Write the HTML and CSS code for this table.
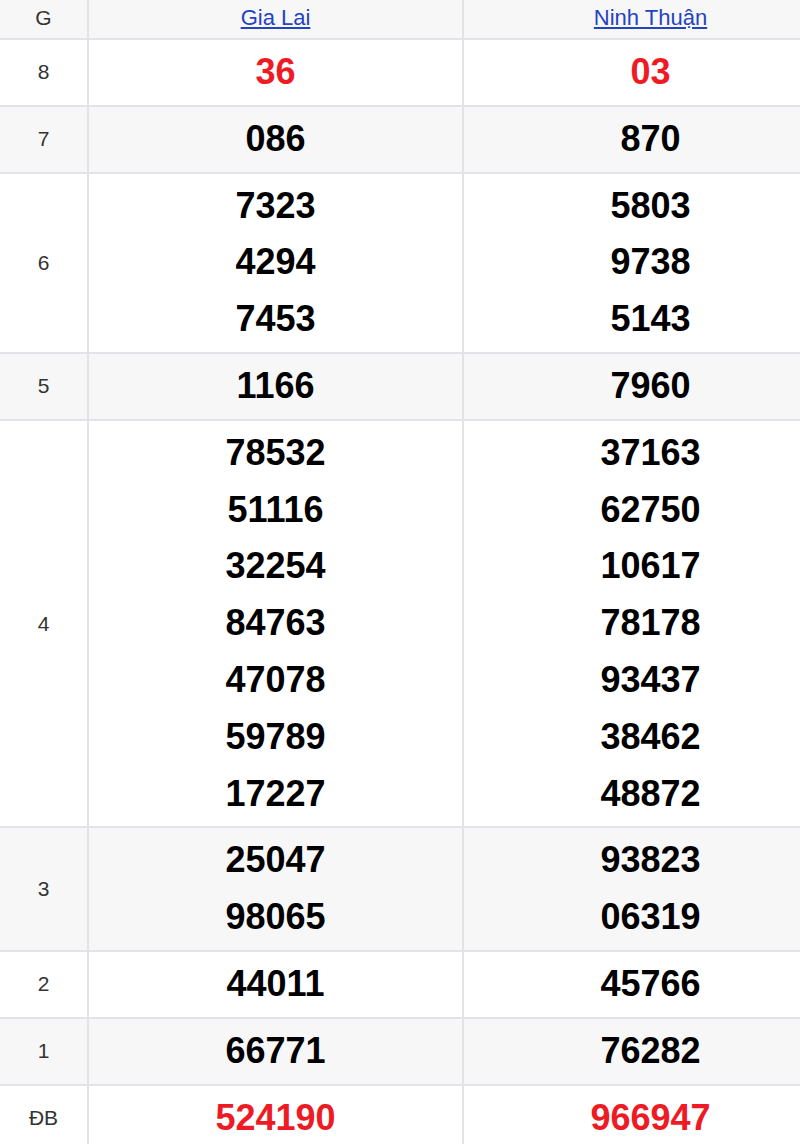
FILE: index.html
```html
<!DOCTYPE html>
<html lang="vi">
<head>
<meta charset="utf-8">
<title>Kết quả xổ số</title>
<link rel="stylesheet" href="styles.css">
</head>
<body>
<div class="wrap">
<table class="kq">
  <colgroup><col class="c-label"><col class="c-prov"><col class="c-prov"></colgroup>
  <thead>
    <tr class="alt">
      <th class="label">G</th>
      <th class="prov"><a href="#">Gia Lai</a></th>
      <th class="prov"><a href="#">Ninh Thuận</a></th>
    </tr>
  </thead>
  <tbody>
    <tr>
      <td class="label">8</td>
      <td class="num red"><div>36</div></td>
      <td class="num red"><div>03</div></td>
    </tr>
    <tr class="alt">
      <td class="label">7</td>
      <td class="num"><div>086</div></td>
      <td class="num"><div>870</div></td>
    </tr>
    <tr>
      <td class="label">6</td>
      <td class="num"><div>7323</div><div>4294</div><div>7453</div></td>
      <td class="num"><div>5803</div><div>9738</div><div>5143</div></td>
    </tr>
    <tr class="alt">
      <td class="label">5</td>
      <td class="num"><div>1166</div></td>
      <td class="num"><div>7960</div></td>
    </tr>
    <tr>
      <td class="label">4</td>
      <td class="num"><div>78532</div><div>51116</div><div>32254</div><div>84763</div><div>47078</div><div>59789</div><div>17227</div></td>
      <td class="num"><div>37163</div><div>62750</div><div>10617</div><div>78178</div><div>93437</div><div>38462</div><div>48872</div></td>
    </tr>
    <tr class="alt">
      <td class="label">3</td>
      <td class="num"><div>25047</div><div>98065</div></td>
      <td class="num"><div>93823</div><div>06319</div></td>
    </tr>
    <tr>
      <td class="label">2</td>
      <td class="num"><div>44011</div></td>
      <td class="num"><div>45766</div></td>
    </tr>
    <tr class="alt">
      <td class="label">1</td>
      <td class="num"><div>66771</div></td>
      <td class="num"><div>76282</div></td>
    </tr>
    <tr>
      <td class="label">ĐB</td>
      <td class="num red"><div>524190</div></td>
      <td class="num red"><div>966947</div></td>
    </tr>
  </tbody>
</table>
</div>
</body>
</html>
```

FILE: styles.css
```css
html, body {
  margin: 0;
  padding: 0;
  background: #ffffff;
  overflow: hidden;
}
.wrap {
  width: 800px;
  overflow: hidden;
}
.kq {
  width: 838px;
  table-layout: fixed;
  border-collapse: collapse;
  font-family: "Liberation Sans", Arial, sans-serif;
  color: #333333;
}
.c-label { width: 88px; }
.c-prov { width: 375px; }
.kq th, .kq td {
  border: 2px solid #e3e3e7;
  text-align: center;
  vertical-align: middle;
  padding: 0;
}
.kq tr:first-child th { border-top: none; }
.kq th:first-child, .kq td:first-child { border-left: none; }
.alt { background: #f7f7f7; }
.kq th {
  font-weight: normal;
  line-height: 34px;
  height: 36px;
  padding-bottom: 2px;
}
.label {
  font-size: 21px;
  color: #333333;
}
.prov {
  font-size: 22px;
}
.prov a {
  color: #2443c0;
  text-decoration: underline;
}
.kq td.num {
  padding: 4px 0 4px;
  font-size: 36px;
  font-weight: bold;
  color: #000000;
  line-height: 56.8px;
}
.kq td.num.red {
  color: #ee1b24;
}
```
